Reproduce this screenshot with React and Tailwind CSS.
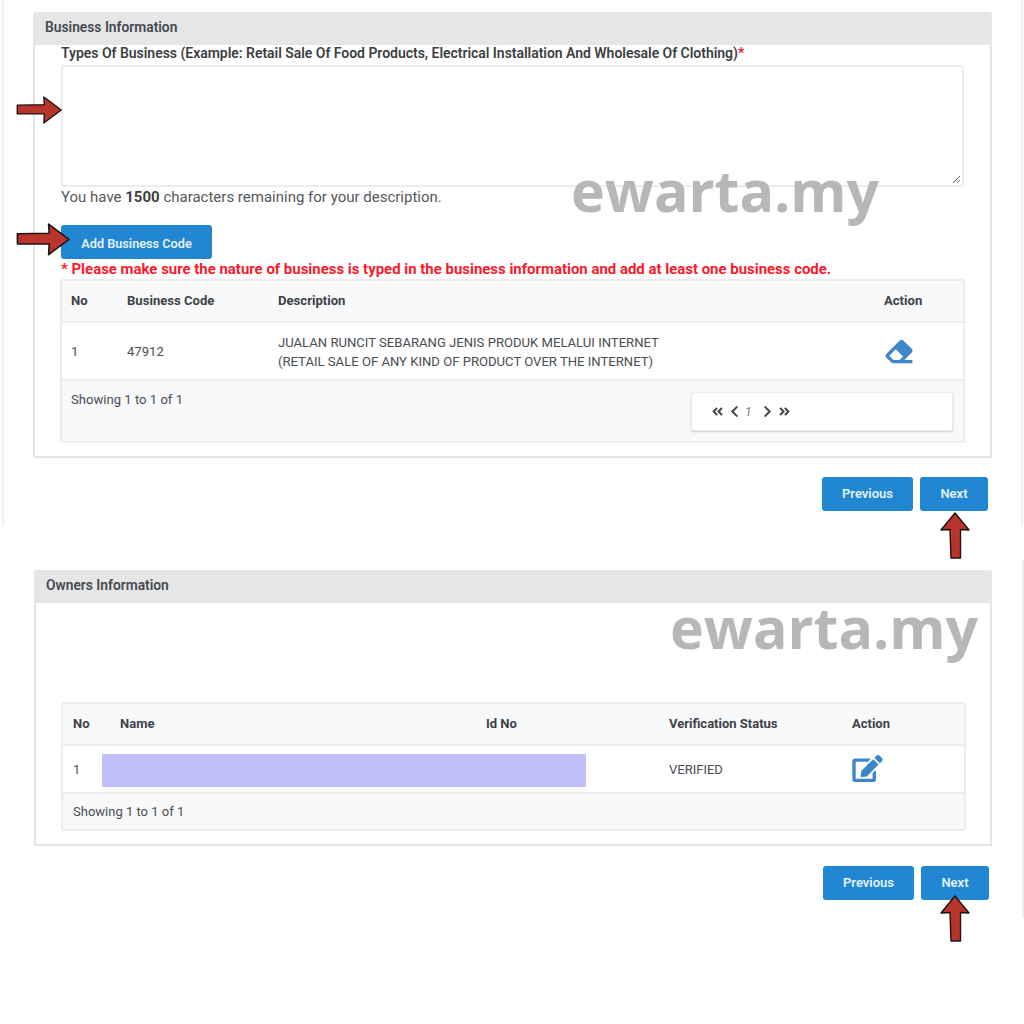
import React from "react";
import { FaEraser, FaEdit, FaAngleDoubleLeft, FaAngleDoubleRight, FaChevronLeft, FaChevronRight } from "react-icons/fa";

function ArrowRight({ className }) {
  return (
    <svg className={className} viewBox="0 0 48 30" fill="#b9352c" stroke="#1c1414" strokeWidth="1.4" strokeLinejoin="round">
      <path d="M1 9.5 L29 9 L28.5 1 L46.5 14.5 L28.5 28 L29 18.5 L1 18.5 Z" />
    </svg>
  );
}

function ArrowUp({ className }) {
  return (
    <svg className={className} viewBox="0 0 30 47" fill="#b9352c" stroke="#1c1414" strokeWidth="1.4" strokeLinejoin="round">
      <path d="M15 1 L29 18 L20.5 17.5 L20.5 46 L11 46 L10 17.5 L1 18 Z" />
    </svg>
  );
}

function Buttons() {
  return (
    <div className="flex justify-end gap-[7px]">
      <button className="h-[34px] w-[91px] rounded-[3px] bg-[#2187d3] text-[13px] font-semibold text-[#e4f2fb]">Previous</button>
      <button className="h-[34px] w-[68px] rounded-[3px] bg-[#2187d3] text-[13px] font-semibold text-[#e4f2fb]">Next</button>
    </div>
  );
}

function Header({ children, pad }) {
  return (
    <div className={`flex h-[33px] items-center bg-[#e6e6e6] pb-[2px] text-[13.8px] font-semibold text-[#454a52] ${pad}`}>{children}</div>
  );
}

export default function App() {
  return (
    <div className="relative h-[1024px] w-[1024px] overflow-hidden bg-white font-['Roboto',sans-serif] text-[#4a4d52]">
      {/* first capture */}
      <section className="ml-[2px] mr-[1px] h-[526px] border-x-2 border-[#efefef] pl-[29px] pr-[29px] pt-3">
        <div className="w-[959px] rounded-t-[3px] border-x-2 border-b-2 border-t-2 border-[#e6e6e6]">
          <Header pad="pl-[10px] -mt-[2px]">Business Information</Header>
          <div className="h-[410px] pl-[26px] pr-[26px]">
            <div className="text-[14px] leading-[14px] font-semibold tracking-[-0.03px] text-[#3c3f44] mt-[1px]">
              Types Of Business (Example: Retail Sale Of Food Products, Electrical Installation And Wholesale Of Clothing)<span className="text-[#e5232b]">*</span>
            </div>
            <div className="relative mt-[5px] h-[122px] w-[903px] rounded-[3px] border-2 border-[#ececec]">
              <svg className="absolute bottom-[1px] right-[1px] h-[9px] w-[9px]" viewBox="0 0 9 9" stroke="#666" strokeWidth="1">
                <path d="M1 8 L8 1 M5 8 L8 5" />
              </svg>
            </div>
            <p className="text-[15px] leading-[20px] text-[#55585c]">
              You have <b className="font-bold text-[#3c3f44]">1500</b> characters remaining for your description.
            </p>
            <button className="mt-[18px] block h-[34px] w-[151px] rounded-[3px] bg-[#2187d3] pt-[3px] text-[12.7px] font-semibold text-[#e4f2fb]">Add Business Code</button>
            <p className="h-[20px] text-[14.95px] leading-[20px] font-bold text-[#fb1a2b]">
              * Please make sure the nature of business is typed in the business information and add at least one business code.
            </p>
            <div className="-ml-[1px] h-[164px] w-[905px] rounded-[3px] border-2 border-[#ececec] bg-[#f8f9fb] text-[13.1px] text-[#4a4d52]">
              <div className="grid h-[42px] grid-cols-[56px_151px_606px_1fr] items-center border-b-2 border-[#ececec] pl-[9px] font-bold text-[#3f4248]">
                <span>No</span><span>Business Code</span><span>Description</span><span>Action</span>
              </div>
              <div className="grid h-[58px] grid-cols-[56px_151px_606px_1fr] items-center border-b-2 border-[#ececec] bg-white pl-[9px] pt-[2px]">
                <span>1</span>
                <span>47912</span>
                <span className="leading-[19px]">JUALAN RUNCIT SEBARANG JENIS PRODUK MELALUI INTERNET<br />(RETAIL SALE OF ANY KIND OF PRODUCT OVER THE INTERNET)</span>
                <FaEraser className="-mt-[2px] ml-[1px] h-[27px] w-[28px] text-[#3f85c9]" />
              </div>
              <div className="flex justify-between pl-[9px] pr-[10px] pt-[10px]">
                <span className="leading-[18px]">Showing 1 to 1 of 1</span>
                <div className="mt-[1px] flex h-[39px] w-[262px] items-center gap-[6px] rounded-[3px] border border-[#ececec] bg-white pl-[19px] text-[#45484d] shadow-[0_1px_2px_rgba(0,0,0,0.2)]">
                  <FaAngleDoubleLeft className="h-[13px] w-[13px]" />
                  <FaChevronLeft className="h-[13px] w-[9px]" />
                  <i className="w-[12px] text-[12px] text-[#777]">1</i>
                  <FaChevronRight className="h-[13px] w-[9px]" />
                  <FaAngleDoubleRight className="h-[13px] w-[13px]" />
                </div>
              </div>
            </div>
          </div>
        </div>
        <div className="mt-[19px] w-[955px]"><Buttons /></div>
      </section>

      {/* second capture */}
      <section className="relative h-[392px] pl-[34px] pt-[44px]">
        <div className="absolute right-0 top-[34px] h-[358px] w-[2px] bg-[#efefef]" />
        <div className="h-[276px] w-[958px] rounded-t-[3px] border-x-2 border-b-2 border-[#e6e6e6]">
          <Header pad="pl-[10px]">Owners Information</Header>
          <div className="pl-[25px] pt-[99px]">
            <div className="h-[129px] w-[905px] rounded-[3px] border-2 border-[#ececec] bg-[#f8f9fb] text-[13px]">
              <div className="grid h-[42px] grid-cols-[47px_366px_183px_183px_1fr] items-center border-b-2 border-[#ececec] pb-[1px] pl-[10px] font-bold text-[#3f4248]">
                <span>No</span><span>Name</span><span>Id No</span><span>Verification Status</span><span>Action</span>
              </div>
              <div className="relative grid h-[48px] grid-cols-[47px_366px_183px_183px_1fr] items-center border-b-2 border-[#ececec] bg-white pl-[10px] pt-[1px]">
                <span>1</span><span /><span />
                <span>VERIFIED</span>
                <FaEdit className="-mt-[2px] h-[27px] w-[31px] text-[#3f85c9]" />
                <div className="absolute left-[39px] top-[8px] h-[33px] w-[484px] bg-[#c0befb]" />
              </div>
              <div className="flex h-[35px] items-center pl-[10px]">Showing 1 to 1 of 1</div>
            </div>
          </div>
        </div>
        <div className="mt-[20px] w-[955px]"><Buttons /></div>
      </section>

      {/* annotations lying over the page */}
      <ArrowRight className="absolute left-[16px] top-[96px] h-[29px] w-[47px]" />
      <ArrowRight className="absolute left-[16px] top-[223px] h-[34px] w-[55px]" />
      <ArrowUp className="absolute left-[940px] top-[512px] h-[47px] w-[30px]" />
      <ArrowUp className="absolute left-[940px] top-[895px] h-[47px] w-[30px]" />
      <div className="absolute left-[571px] top-[155px] font-['Open_Sans',sans-serif] text-[57.3px] leading-[70px] font-bold text-[#b7b7b7]">ewarta.my</div>
      <div className="absolute left-[670px] top-[592px] font-['Open_Sans',sans-serif] text-[57.3px] leading-[70px] font-bold text-[#b7b7b7]">ewarta.my</div>
    </div>
  );
}
